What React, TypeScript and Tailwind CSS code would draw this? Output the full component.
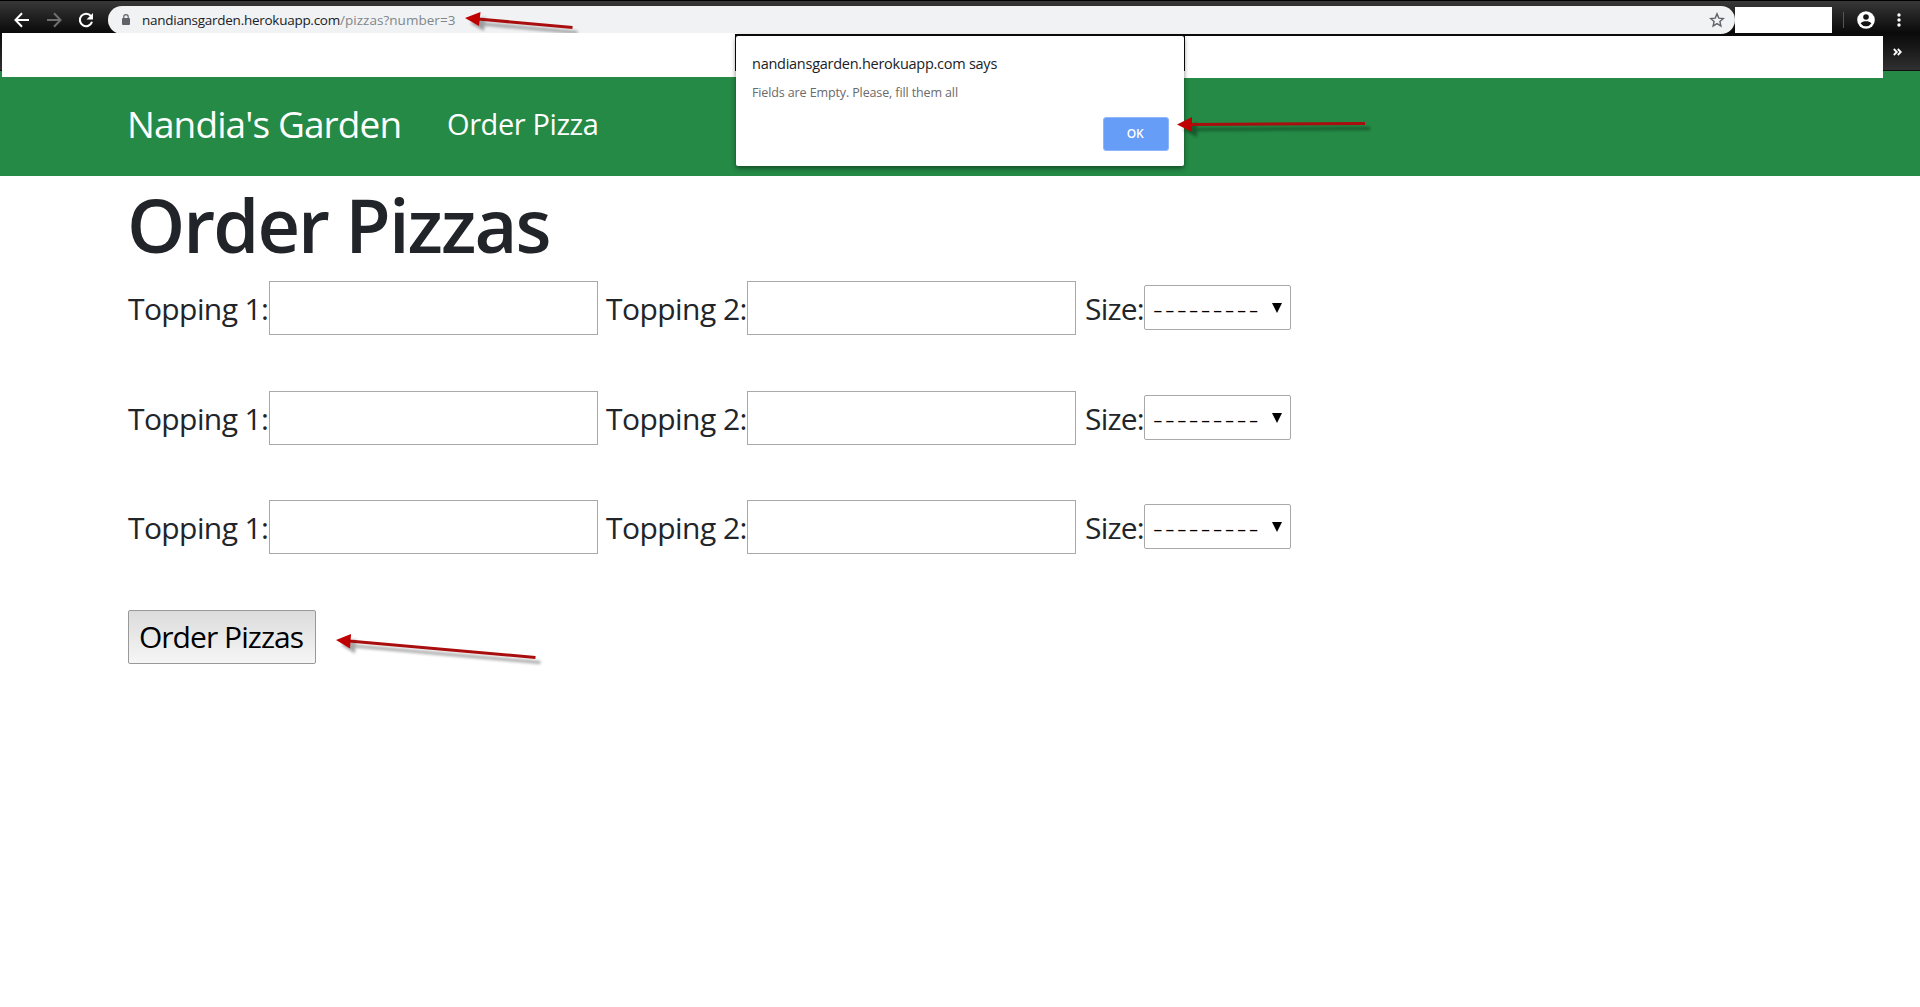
import React from 'react';

function Arrow({ className, d, head }: { className: string; d: string; head: string }) {
  return (
    <svg className={className} fill="none" overflow="visible">
      <g className="opacity-35 blur-[1.5px]" transform="translate(5 5)">
        <path d={d} stroke="#000" strokeWidth="3" />
        <path d={head} fill="#000" />
      </g>
      <path d={d} stroke="#a90e0e" strokeWidth="3" />
      <path d={head} fill="#c00000" />
    </svg>
  );
}

function Toolbar() {
  return (
    <div className="relative h-[71px] bg-[#0b0b0b]">
      <div className="flex h-[34px] items-start border-t border-black bg-linear-to-b from-[#383838] to-[#090909] pt-[5px]">
        <svg className="mt-[6px] ml-[14px] h-4 w-4 shrink-0" viewBox="0 0 16 16" fill="none" stroke="#fff" strokeWidth="2">
          <path d="M15 8H2M8 1.3 1.5 8 8 14.7" />
        </svg>
        <svg className="mt-[6px] ml-4 h-4 w-4 shrink-0" viewBox="0 0 16 16" fill="none" stroke="#6f6f6f" strokeWidth="2">
          <path d="M1 8h13M8 1.3 14.5 8 8 14.7" />
        </svg>
        <svg className="mt-[6px] ml-4 h-4 w-4 shrink-0" viewBox="0 0 16 16" fill="none">
          <path d="M13 4.2A6.2 6.2 0 1 0 14 9.8" stroke="#fff" strokeWidth="2.1" />
          <path d="M15 1v6.5H8.5z" fill="#fff" />
        </svg>
        <div className="ml-[14px] flex h-7 w-[1627px] shrink-0 rounded-full bg-[#f1f2f4] pl-[14px]">
          <svg className="mt-2 h-[11px] w-[8px]" viewBox="0 0 8 11">
            <path d="M1.8 5V2.8a2.2 2.2 0 0 1 4.4 0V5" fill="none" stroke="#5f6368" strokeWidth="1.2" />
            <rect y="4" width="8" height="7" rx="1" fill="#5f6368" />
          </svg>
          <span className="ml-[12px] text-[13.5px] leading-[28px] tracking-[-0.27px] whitespace-nowrap text-[#202124]">
            nandiansgarden.herokuapp.com<span className="tracking-[0.04px] text-[#80868b]">/pizzas?number=3</span>
          </span>
          <svg className="mt-[6px] mr-[10px] ml-auto h-[16px] w-[16px]" viewBox="0 0 16 16" fill="none" stroke="#5f6368" strokeWidth="1.4">
            <path d="m8 1.9 1.8 4.2 4.5.4-3.4 3 1 4.5L8 11.6 4.1 14l1-4.5-3.4-3 4.5-.4z" />
          </svg>
        </div>
        <div className="mt-[1px] h-[26px] w-[97px] shrink-0 bg-white" />
        <div className="mt-[6px] ml-[11px] h-4 w-px bg-[#555]" />
        <svg className="mt-[5px] ml-[13px] h-[18px] w-[18px]" viewBox="0 0 18 18">
          <circle cx="9" cy="9" r="8.8" fill="#fff" />
          <circle cx="9" cy="6" r="2.8" fill="#161616" />
          <path d="M3.6 12.6C4.4 10.8 7 10.3 9 10.3s4.6.5 5.4 2.3A6.5 6.5 0 0 1 9 15.3a6.5 6.5 0 0 1-5.4-2.7z" fill="#161616" />
        </svg>
        <svg className="mt-[7px] ml-[22px] h-[14px] w-1" viewBox="0 0 4 14" fill="#fff">
          <circle cx="2" cy="2" r="1.7" />
          <circle cx="2" cy="7" r="1.7" />
          <circle cx="2" cy="12" r="1.7" />
        </svg>
      </div>
      <div className="flex h-[37px] justify-end border-b border-[#111] bg-linear-to-b from-[#0b0b0b] to-[#303030]">
        <svg className="mt-[14px] mr-[18px] h-2 w-[9px]" viewBox="0 0 9 8" fill="none" stroke="#fff" strokeWidth="1.8">
          <path d="m.8 1 3 3-3 3M4.8 1l3 3-3 3" />
        </svg>
      </div>
      <div className="absolute top-[33px] left-[2px] h-[44px] w-[735px] bg-white" />
      <div className="absolute top-[36px] left-[1184px] h-[42px] w-[699px] bg-white" />
    </div>
  );
}

function PizzaRow() {
  return (
    <div className="flex h-[109.5px] items-start text-[30px] leading-[56px] whitespace-nowrap text-[#212529]">
      <label className="w-[141px] tracking-[-0.6px]">Topping 1:</label>
      <input className="h-[54px] w-[329px] border border-[#a9a9a9] bg-white" />
      <label className="ml-[8px] w-[141px] tracking-[-0.55px]">Topping 2:</label>
      <input className="h-[54px] w-[329px] border border-[#a9a9a9] bg-white" />
      <label className="ml-[9px] w-[59px] tracking-[-0.8px]">Size:</label>
      <div className="mt-1 flex h-[45px] w-[147px] justify-between rounded-[2px] border border-[#a9a9a9] pr-[8px] pl-[8px] text-black">
        <span className="font-light leading-[46px] tracking-[2.3px]">---------</span>
        <svg className="mt-[17px] h-[10px] w-[10px] shrink-0" viewBox="0 0 10 10">
          <path d="M0 0h10L5 10z" />
        </svg>
      </div>
    </div>
  );
}

export default function App() {
  return (
    <div className="relative h-[1007px] w-[1920px] overflow-hidden bg-white font-['Open_Sans',sans-serif]">
      <div className="bg-[#248a46]">
        <Toolbar />
        <nav className="flex h-[105px] items-start pt-[24px] pl-[127px] whitespace-nowrap text-white">
          <span className="w-[320px] text-[37px] leading-[58px] tracking-[-0.9px]">Nandia's Garden</span>
          <span className="text-[29px] leading-[58px] tracking-[-0.4px]">Order Pizza</span>
        </nav>
      </div>
      <main className="pl-[128px]">
        <h1 className="-ml-px h-[105px] text-[74px] leading-[97px] font-semibold tracking-[-1.95px] text-[#212529]">
          Order Pizzas
        </h1>
        <PizzaRow />
        <PizzaRow />
        <PizzaRow />
        <button className="h-[54px] w-[188px] rounded-[2px] border border-[#999] bg-linear-to-b from-[#dcdcdc] to-[#f6f6f6] pr-[2px] text-[30px] leading-[52px] tracking-[-0.95px] whitespace-nowrap text-black">
          Order Pizzas
        </button>
      </main>
      <div className="absolute top-[34px] left-[735px] h-[37px] w-[450px] bg-[#0b0b0b]" />
      <div className="absolute top-[34px] left-[1184px] h-[2px] w-[699px] bg-[#0b0b0b]" />
      <div className="absolute top-[36px] left-[736px] flex h-[130px] w-[448px] flex-col rounded-[2px] bg-white pr-[15px] pl-4 shadow-[0_2px_5px_rgba(0,0,0,0.5)]">
        <p className="mt-[18px] text-[14.5px] leading-[20px] tracking-[-0.26px] whitespace-nowrap text-[#202124]">
          nandiansgarden.herokuapp.com says
        </p>
        <p className="mt-[9px] text-[12.5px] leading-[20px] tracking-[-0.12px] whitespace-nowrap text-[#6a6a6a]">
          Fields are Empty. Please, fill them all
        </p>
        <button className="mt-[14px] flex h-[34px] w-[66px] items-center justify-center self-end rounded-[3px] border border-[#8fb6fa] bg-[#669df6] pr-[2px] text-[12px] font-semibold tracking-[-0.3px] text-white">
          OK
        </button>
      </div>
      <Arrow className="absolute top-0 left-0 h-[33px] w-[620px] [clip-path:inset(0)]" d="M478 19 L572.5 27.5" head="M465 18 L480.5 12 L479 26z" />
      <Arrow className="absolute top-0 left-0 h-[200px] w-[1400px]" d="M1190 124.5 L1365 123.5" head="M1177 124.5 L1192 117 L1192 132z" />
      <Arrow className="absolute top-0 left-0 h-[700px] w-[600px]" d="M349 641 L535.5 657.5" head="M336 640 L351 634 L350 648.5z" />
    </div>
  );
}
